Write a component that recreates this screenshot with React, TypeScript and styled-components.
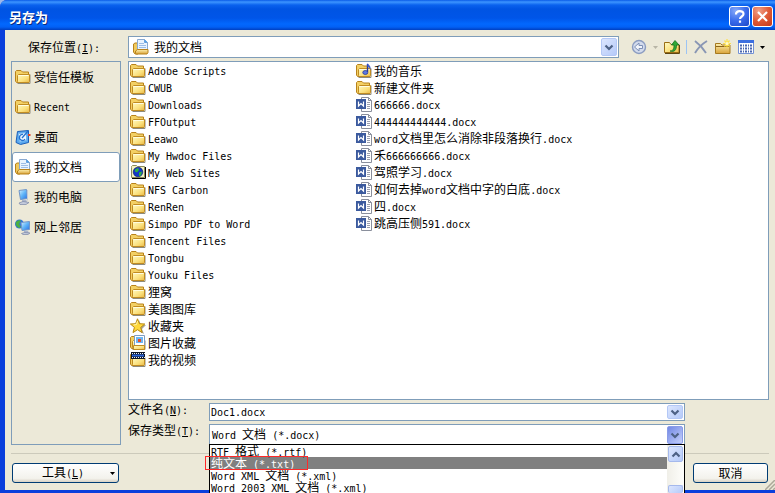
import React, { useState } from "react";
import styled, { createGlobalStyle, css } from "styled-components";

const GlobalStyle = createGlobalStyle`
  *, *::before, *::after { box-sizing: border-box; }
  html, body { margin: 0; padding: 0; overflow: hidden; }
  body, button, input, select {
    font-family: "Noto Sans CJK SC", sans-serif;
    font-size: 12px;
    color: #000;
  }
`;

const line = "#7f9db9";
const face = "#ece9d8";

/* ---------- text ---------- */

const Latin = styled.span`
  font-family: "DejaVu Sans Mono", monospace;
  font-size: 10px;
  white-space: pre;
`;

const Mixed = ({ children }: { children: string }) => (
  <>
    {(children.match(/[\u3000-\u9fff]+|[^\u3000-\u9fff]+/g) || []).map((run, i) =>
      /[\u3000-\u9fff]/.test(run) ? <span key={i}>{run}</span> : <Latin key={i}>{run}</Latin>
    )}
  </>
);

const Caption = ({ text, accel, colon }: { text: string; accel: string; colon?: boolean }) => (
  <>
    {text}
    <Latin>
      (<u>{accel}</u>){colon ? ":" : ""}
    </Latin>
  </>
);

/* ---------- icons ---------- */

const Svg = styled.svg`
  display: block;
  flex: none;
`;

const Icon = ({ children, w = 16, h = 16 }: { children: React.ReactNode; w?: number; h?: number }) => (
  <Svg width={w} height={h} viewBox={`0 0 ${w} ${h}`} aria-hidden="true">
    {children}
  </Svg>
);

const Gradients = () => (
  <Svg width="0" height="0" aria-hidden="true">
    <defs>
      <linearGradient id="gold" x1="0" y1="0" x2="1" y2="1">
        <stop offset="0" stopColor="#fffbc4" />
        <stop offset="0.6" stopColor="#fbe07c" />
        <stop offset="1" stopColor="#e9b845" />
      </linearGradient>
      <linearGradient id="screen" x1="0" y1="0" x2="1" y2="1">
        <stop offset="0" stopColor="#d8f3ff" />
        <stop offset="0.5" stopColor="#5fb4f8" />
        <stop offset="1" stopColor="#2a6fe0" />
      </linearGradient>
      <linearGradient id="tan" x1="0" y1="0" x2="0" y2="1">
        <stop offset="0" stopColor="#fdf0b0" />
        <stop offset="1" stopColor="#d9a33a" />
      </linearGradient>
    </defs>
  </Svg>
);

const FolderShape = () => (
  <>
    <path d="M2.5 14.5h12.500v-9" fill="none" stroke="#8d8a7c" strokeWidth="1" />
    <path d="M.5 12V2.500L1.500 1.500h4.500L7.500 3h6v10.500H1.500z" fill="#f3d064" stroke="#b8821b" />
    <path d="M3.500 5.500h11v7L14 13.500H3L2.500 12.500v-6z" fill="url(#gold)" stroke="#c18c22" />
    <path d="M3.500 6.500h10" stroke="#fffde0" />
  </>
);

const Folder = () => (
  <Icon>
    <FolderShape />
  </Icon>
);

const Documents = () => (
  <Icon>
    <path d="M.5 13V5L2 4h3v11H2z" fill="#f0c95c" stroke="#b8821b" />
    <path d="M4.500.5h7l3 3v8h-10z" fill="#e9f4ff" stroke="#8aa9d0" />
    <path d="M11.500.5v3h3" fill="#4fa6ee" stroke="#6aa0dc" />
    <path d="M6 4.500h5M6 6.500h7M6 8.500h7" stroke="#9dbde6" />
    <path d="M2.500 14.500V12l2-1.500h10.500v3l-1 1.500h-11z" fill="url(#tan)" stroke="#b8821b" />
  </Icon>
);

const Desktop = () => (
  <Icon>
    <path d="M2.500 2.500l11-1v12l-8 2-4.500-2z" fill="#5aa9f0" stroke="#1b5fb8" />
    <path d="M3.500 4.500l8-1v8l-7 1.500z" fill="#eef7ff" stroke="#6db4f2" />
    <path d="M8 5.500a3 3 0 1 0 2 4.500" fill="none" stroke="#2372cf" strokeWidth="1.300" />
    <path d="M7 9l6-7" stroke="#2372cf" strokeWidth="1.300" />
    <path d="M13 5h2.500v2H13z" fill="#e0442a" />
  </Icon>
);

const Computer = () => (
  <Icon>
    <path d="M4 1.500L11.500.5l1 9-7 1z" fill="url(#screen)" stroke="#7196c8" />
    <path d="M12.500 1v10l-1 1" fill="none" stroke="#c3cad8" />
    <path d="M7 11h4l1 2H7z" fill="#aab4ca" />
    <path d="M4 14l4-1.500 6 1-3 2H5z" fill="#c4cbdc" stroke="#7b86a6" strokeWidth=".7" />
  </Icon>
);

const Network = () => (
  <Icon>
    <circle cx="4.500" cy="5" r="4.500" fill="#2f72d8" />
    <path d="M1 3c2-2 4-2 5-1L4 5l2 3-2 1C2 8 0 6 1 3z" fill="#4cb043" />
    <path d="M6 3.500l8.500-1v8l-7.500 1z" fill="url(#screen)" stroke="#7196c8" />
    <path d="M9 12h4l1 2H9z" fill="#aab4ca" />
    <path d="M6.500 14.500l3-1 5.500.500-2 1.500H8z" fill="#c4cbdc" stroke="#7b86a6" strokeWidth=".7" />
  </Icon>
);

const WebFolder = () => (
  <Icon>
    <path d="M1.500 2.500v-1l1-1h4l1 1h7v11h-13z" fill="#f4f1c0" stroke="#8b8a5c" />
    <path d="M15.500 2v11.500H2" fill="none" stroke="#000" />
    <circle cx="8" cy="7" r="4.800" fill="#1238c8" stroke="#001060" strokeWidth=".6" />
    <path d="M5 4.500l3-1.500 1 2L7 7.500 5 6.500zM9 7.500l3-1-1 4-2 .500z" fill="#2fb43c" />
  </Icon>
);

const Star = () => (
  <Icon>
    <path d="M9 2l2 5h5l-4 4 2 5-5-3" fill="#a9a494" />
    <path d="M7.500.8l2 4.900 5.300.3-4.100 3.400 1.400 5.200-4.600-2.900L3 14.600l1.400-5.200L.4 6l5.200-.3z" fill="#ffd83a" stroke="#b98a12" />
    <path d="M7.500 3L6.500 6.500 3.500 7" fill="none" stroke="#fff6b0" />
  </Icon>
);

const Pictures = () => (
  <Icon>
    <FolderShape />
    <path d="M4.500.5h10v10h-10z" fill="#fff" stroke="#7f9dc0" />
    <path d="M6 2h7v6H6z" fill="#6db6f5" />
    <path d="M8 4h3v3H8z" fill="#e2502c" />
    <path d="M3.500 10.500h11v4h-11z" fill="url(#gold)" stroke="#c18c22" />
  </Icon>
);

const Video = () => (
  <Icon>
    <FolderShape />
    <path d="M1 0h14v7H1z" fill="#101828" />
    <path d="M2 1.500h13M2 5.500h13" stroke="#e8f0ff" strokeDasharray="1 1" />
    <path d="M2 2.500h12v2H2z" fill="#2b64d8" />
  </Icon>
);

const Music = () => (
  <Icon>
    <FolderShape />
    <path d="M11.500 1v8" stroke="#26379c" strokeWidth="1.400" />
    <path d="M11.500 0l3 4v3L13 4.500l-1.500-1z" fill="#4060d0" />
    <ellipse cx="9.300" cy="9.500" rx="2.500" ry="2" fill="#5b78e0" stroke="#26379c" strokeWidth=".8" />
  </Icon>
);

const WordDoc = () => (
  <Icon>
    <path d="M5.500.5h7l3 3v11h-10z" fill="#fff" stroke="#8a8f9c" />
    <path d="M12.500.5v3h3" fill="none" stroke="#8a8f9c" />
    <path d="M11 5.500h3M11 7.500h3M11 9.500h3M11 11.500h3" stroke="#9a9fae" />
    <path d="M0 2h10v10H0z" fill="#3b5a9e" />
    <path d="M2.500 4.500v4.500L5 6.500l2.500 2.500V4.500" fill="none" stroke="#fff" strokeWidth="1.200" />
  </Icon>
);

const Chevron = ({ up }: { up?: boolean }) => (
  <Icon w={10} h={7}>
    <path d={up ? "M1.500 5.500L5 2l3.500 3.500" : "M1.500 1.500L5 5l3.500-3.500"} fill="none" stroke="#4d6185" strokeWidth="2.200" />
  </Icon>
);

const Caret = ({ color = "#000" }: { color?: string }) => (
  <Icon w={5} h={3}>
    <path d="M0 0h5L2.500 3z" fill={color} />
  </Icon>
);

const Back = () => (
  <Icon>
    <circle cx="8" cy="8" r="6.500" fill="#d3dbec" stroke="#8b9cc0" strokeWidth="1.400" />
    <path d="M3.500 8L8 4v2.500h3.500v3H8V12z" fill="#f2f5fb" stroke="#7c8fb6" />
  </Icon>
);

const UpFolder = () => (
  <Icon>
    <path d="M.5 13.500v-10h5l1.500 2h8v8z" fill="url(#gold)" stroke="#9a6d14" />
    <path d="M1 14.500h14.500V6" fill="none" stroke="#5c4512" />
    <path d="M6 12c3 0 4-2 4-6H7.500L11 1.500 15 6h-2.500c0 5-2 7.500-6.500 6z" fill="#2fa836" stroke="#14701e" strokeWidth=".8" />
  </Icon>
);

const Delete = () => (
  <Icon>
    <path d="M2 2c4 3 8 7 11 12M14 2C9 5 5 9 2 14" fill="none" stroke="#8996b4" strokeWidth="1.900" />
  </Icon>
);

const NewFolder = () => (
  <Icon>
    <path d="M.5 14.500v-10h5l1.500 1.500h8v8.500z" fill="url(#tan)" stroke="#a67a20" />
    <path d="M1 7.500h13.500" stroke="#8a6318" />
    <path d="M12 0v9M8 4.500h8M9.500 1.500l5 6M14.500 1.500l-5 6" stroke="#ffe14a" strokeWidth="1.200" />
    <circle cx="12" cy="4.500" r="1.500" fill="#fffbd0" />
  </Icon>
);

const Views = () => (
  <Icon>
    <path d="M.5 1.500h15v13H.5z" fill="#fff" stroke="#7391d4" />
    <path d="M0 1h16v3H0z" fill="#3d6fe0" />
    <path d="M2 6.500h12M2 9.500h12M2 12.500h12" stroke="#4a66b0" strokeWidth="2" strokeDasharray="2 1 1 1" />
  </Icon>
);

/* ---------- window ---------- */

const Window = styled.main`
  position: relative;
  display: flex;
  flex-direction: column;
  height: 100vh;
  overflow: hidden;
  background: #0a3fdc;
`;

const TitleBar = styled.header`
  display: flex;
  flex: none;
  align-items: center;
  gap: 2px;
  height: 30px;
  padding: 3px 2px 0 9px;
  border-top-left-radius: 7px;
  box-shadow: 0 -8px 0 8px #9db8ea;
  clip-path: inset(0);
  background: linear-gradient(#0a5be8 0, #3d95ff 2px, #0a62ee 5px, #0054e3 9px, #0055e8 18px, #0268fe 24px, #0260f5 27px, #003fc0 30px);
`;

const Title = styled.h1`
  flex: 1;
  margin: 0;
  color: #fff;
  font-size: 13px;
  line-height: 20px;
  font-weight: 700;
  text-shadow: 1px 1px #0a2a80;
`;

const CaptionButton = styled.button<{ $close?: boolean }>`
  display: grid;
  place-items: center;
  width: 21px;
  height: 21px;
  padding: 0;
  border: 1px solid #fff;
  border-radius: 3px;
  background: ${(p) =>
    p.$close
      ? "radial-gradient(circle at 30% 20%, #f0a088, #e05a36 50%, #c4381a)"
      : "radial-gradient(circle at 30% 20%, #86a8f8, #3a6cec 50%, #1c48c8)"};
`;

const Body = styled.div`
  display: flex;
  flex: 1;
  flex-direction: column;
  min-height: 0;
  margin: 0 0 3px 5px;
  padding: 6px 6px 7px;
  background: ${face};
`;

const LookRow = styled.div`
  display: grid;
  grid-template-columns: 117px 1fr 150px;
  grid-template-rows: 22px;
  flex: none;
  margin-bottom: 3px;
`;

const LookLabel = styled.label`
  padding-left: 17px;
  line-height: 22px;
`;

const Combo = styled.div`
  position: relative;
  display: grid;
  grid-template-columns: 1fr 18px;
  align-items: center;
  border: 1px solid ${line};
  background: #fff;
`;

const LookSelect = styled.select`
  grid-area: 1 / 1 / 2 / 3;
  width: 100%;
  height: 20px;
  padding: 0 20px 0 25px;
  border: 0;
  appearance: none;
  background: transparent;
  line-height: 20px;
  outline: none;
`;

const LookIcon = styled.span`
  grid-area: 1 / 1;
  padding-left: 4px;
  pointer-events: none;
`;

const Drop = styled.span<{ $pressed?: boolean }>`
  grid-area: 1 / 2;
  display: grid;
  place-items: center;
  align-self: stretch;
  margin: 1px;
  border: 1px solid ${(p) => (p.$pressed ? "#8a9ce8" : "#b4c8f6")};
  border-radius: 2px;
  background: ${(p) =>
    p.$pressed ? "linear-gradient(135deg, #7288e4, #c4d0fc)" : "linear-gradient(135deg, #dce6fe, #b5caf9)"};
  pointer-events: none;
`;

const ToolBar = styled.div`
  display: flex;
  align-items: center;
  padding-left: 12px;
`;

const ToolButton = styled.button<{ $gap?: number }>`
  padding: 0;
  border: 0;
  background: none;
  margin-right: ${(p) => p.$gap ?? 8}px;
`;

const ToolDivider = styled.span`
  width: 1px;
  height: 14px;
  margin-right: 6px;
  background: #9cc4f4;
`;

const Content = styled.div`
  display: grid;
  grid-template-columns: 110px 1fr;
  gap: 7px;
  flex: 1;
  min-height: 0;
`;

const Places = styled.nav`
  display: flex;
  flex-direction: column;
  border: 1px solid ${line};
`;

const Place = styled.button<{ $active?: boolean }>`
  display: flex;
  align-items: center;
  gap: 3px;
  height: 30px;
  padding: 0 0 0 2px;
  border: 1px solid transparent;
  border-radius: 3px;
  background: none;
  text-align: left;
  line-height: 18px;
  ${(p) =>
    p.$active &&
    css`
      border-color: ${line};
      background: #fff;
    `}
`;

const MainColumn = styled.div`
  display: flex;
  flex-direction: column;
  gap: 3px;
  min-width: 0;
`;

const Files = styled.div`
  display: flex;
  flex: 1;
  min-height: 0;
  padding: 0 1px;
  border: 1px solid ${line};
  background: #fff;
`;

const FileColumn = styled.ul`
  flex: none;
  width: 226px;
  margin: 0;
  padding: 0;
  list-style: none;
`;

const File = styled.li`
  display: flex;
  align-items: center;
  gap: 2px;
  height: 17px;
  line-height: 17px;
  white-space: nowrap;
`;

const Field = styled.div<{ $tall?: boolean }>`
  display: grid;
  grid-template-columns: 81px 1fr;
  flex: none;
  height: ${(p) => (p.$tall ? 21 : 18)}px;
  padding-right: 84px;
`;

const FieldLabel = styled.label`
  line-height: 12px;
`;

const NameInput = styled.input`
  grid-area: 1 / 1 / 2 / 3;
  width: 100%;
  height: 16px;
  padding: 0 20px 0 1px;
  border: 0;
  outline: none;
  background: transparent;
  font-family: "DejaVu Sans Mono", monospace;
  font-size: 10px;
`;

const TypeValue = styled.span`
  grid-area: 1 / 1;
  padding-left: 2px;
  line-height: 18px;
  white-space: nowrap;
`;

const TypeSelect = styled.select`
  grid-area: 1 / 1 / 2 / 3;
  width: 100%;
  height: 19px;
  opacity: 0;
`;

const Popup = styled.div`
  position: absolute;
  z-index: 2;
  top: 19px;
  left: -1px;
  right: -1px;
  display: grid;
  grid-template-columns: 1fr 17px;
  border: 1px solid #000;
  background: #fff;
`;

const Options = styled.ul`
  margin: 0;
  padding: 0;
  list-style: none;
`;

const Option = styled.li<{ $active?: boolean }>`
  height: 12px;
  padding-left: 1px;
  line-height: 12px;
  white-space: nowrap;
  color: ${(p) => (p.$active ? "#fff" : "#000")};
  background: ${(p) => (p.$active ? "#808080" : "transparent")};
`;

const Scroll = styled.div`
  display: flex;
  flex-direction: column;
  justify-content: space-between;
  padding: 1px 1px 0;
  background: linear-gradient(90deg, #f0efe8, #fefefb);
`;

const ScrollPart = styled.span`
  display: grid;
  place-items: center;
  height: 16px;
  border: 1px solid #a5b9ec;
  border-radius: 2px;
  background: linear-gradient(135deg, #dce6fe, #b5caf9);
`;

const ScrollThumb = styled(ScrollPart)`
  height: 8px;
  border-bottom: 0;
`;

const Mark = styled.span`
  position: absolute;
  z-index: 3;
  top: 31px;
  left: -5px;
  width: 103px;
  height: 14px;
  border: 1px solid #ff2a2a;
  pointer-events: none;
`;

const Footer = styled.footer`
  display: flex;
  flex: none;
  justify-content: space-between;
  margin-top: 8px;
  padding: 9px 1px 0;
  border-top: 1px solid #cccabb;
`;

const PushButton = styled.button<{ $wide?: boolean }>`
  display: flex;
  align-items: center;
  justify-content: center;
  width: ${(p) => (p.$wide ? 107 : 75)}px;
  height: 20px;
  padding: 0 3px;
  border: 1px solid #003c74;
  border-radius: 3px;
  background: linear-gradient(#fff, #f3f2ec 80%, #d8d2c4);
  line-height: 18px;
`;

const PushText = styled.span`
  flex: 1;
`;

const Grip = styled.span`
  position: absolute;
  right: 0;
  bottom: 3px;
`;

const places = [
  { name: "受信任模板", icon: Folder },
  { name: "Recent", icon: Folder },
  { name: "桌面", icon: Desktop },
  { name: "我的文档", icon: Documents },
  { name: "我的电脑", icon: Computer },
  { name: "网上邻居", icon: Network },
];

const columns = [
  [
    { name: "Adobe Scripts", icon: Folder },
    { name: "CWUB", icon: Folder },
    { name: "Downloads", icon: Folder },
    { name: "FFOutput", icon: Folder },
    { name: "Leawo", icon: Folder },
    { name: "My Hwdoc Files", icon: Folder },
    { name: "My Web Sites", icon: WebFolder },
    { name: "NFS Carbon", icon: Folder },
    { name: "RenRen", icon: Folder },
    { name: "Simpo PDF to Word", icon: Folder },
    { name: "Tencent Files", icon: Folder },
    { name: "Tongbu", icon: Folder },
    { name: "Youku Files", icon: Folder },
    { name: "狸窝", icon: Folder },
    { name: "美图图库", icon: Folder },
    { name: "收藏夹", icon: Star },
    { name: "图片收藏", icon: Pictures },
    { name: "我的视频", icon: Video },
  ],
  [
    { name: "我的音乐", icon: Music },
    { name: "新建文件夹", icon: Folder },
    { name: "666666.docx", icon: WordDoc },
    { name: "444444444444.docx", icon: WordDoc },
    { name: "word文档里怎么消除非段落换行.docx", icon: WordDoc },
    { name: "禾666666666.docx", icon: WordDoc },
    { name: "驾照学习.docx", icon: WordDoc },
    { name: "如何去掉word文档中字的白底.docx", icon: WordDoc },
    { name: "四.docx", icon: WordDoc },
    { name: "跳高压侧591.docx", icon: WordDoc },
  ],
];

const listed = ["RTF 格式 (*.rtf)", "纯文本 (*.txt)", "Word XML 文档 (*.xml)", "Word 2003 XML 文档 (*.xml)"];
const types = ["Word 文档 (*.docx)", ...listed];

export default function App() {
  const [place, setPlace] = useState("我的文档");
  const [type, setType] = useState(types[0]);

  return (
    <Window>
      <GlobalStyle />
      <TitleBar>
        <Title>另存为</Title>
        <CaptionButton aria-label="帮助">
          <Icon w={15} h={15}>
            <path d="M4 5.500C4 1 11.500 1 11.500 5c0 2.500-3.500 2.500-3.500 5M8 11.500v2.200" fill="none" stroke="#fff" strokeWidth="2.200" />
          </Icon>
        </CaptionButton>
        <CaptionButton $close aria-label="关闭">
          <Icon w={15} h={15}>
            <path d="M3 3l9 9M12 3l-9 9" stroke="#fff" strokeWidth="2.200" />
          </Icon>
        </CaptionButton>
      </TitleBar>

      <Body>
        <LookRow>
          <LookLabel htmlFor="look">
            <Caption text="保存位置" accel="I" colon />
          </LookLabel>
          <Combo>
            <LookSelect id="look" value={place} onChange={(e) => setPlace(e.target.value)}>
              {places.map((p) => (
                <option key={p.name}>{p.name}</option>
              ))}
            </LookSelect>
            <LookIcon>
              <Documents />
            </LookIcon>
            <Drop>
              <Chevron />
            </Drop>
          </Combo>
          <ToolBar>
            <ToolButton $gap={6} aria-label="后退"><Back /></ToolButton>
            <ToolButton $gap={6} aria-label="历史"><Caret color="#b8b5a6" /></ToolButton>
            <ToolButton $gap={6} aria-label="向上一级"><UpFolder /></ToolButton>
            <ToolDivider />
            <ToolButton $gap={6} aria-label="删除"><Delete /></ToolButton>
            <ToolButton $gap={7} aria-label="新建文件夹"><NewFolder /></ToolButton>
            <ToolButton $gap={6} aria-label="视图"><Views /></ToolButton>
            <ToolButton $gap={0} aria-label="视图选项"><Caret /></ToolButton>
          </ToolBar>
        </LookRow>

        <Content>
          <Places>
            {places.map(({ name, icon: Glyph }) => (
              <Place key={name} $active={name === place} onClick={() => setPlace(name)}>
                <Glyph />
                <span><Mixed>{name}</Mixed></span>
              </Place>
            ))}
          </Places>
          <MainColumn>
            <Files>
              {columns.map((files, i) => (
                <FileColumn key={i}>
                  {files.map(({ name, icon: Glyph }) => (
                    <File key={name}>
                      <Glyph />
                      <span><Mixed>{name}</Mixed></span>
                    </File>
                  ))}
                </FileColumn>
              ))}
            </Files>
            <Field>
              <FieldLabel htmlFor="name">
                <Caption text="文件名" accel="N" colon />
              </FieldLabel>
              <Combo>
                <NameInput id="name" defaultValue="Doc1.docx" />
                <Drop><Chevron /></Drop>
              </Combo>
            </Field>
            <Field $tall>
              <FieldLabel htmlFor="type">
                <Caption text="保存类型" accel="T" colon />
              </FieldLabel>
              <Combo>
                <TypeValue aria-hidden="true"><Mixed>{type}</Mixed></TypeValue>
                <TypeSelect id="type" value={type} onChange={(e) => setType(e.target.value)}>
                  {types.map((t) => (
                    <option key={t}>{t}</option>
                  ))}
                </TypeSelect>
                <Drop $pressed><Chevron /></Drop>
                <Popup>
                  <Options role="listbox" aria-label="保存类型">
                    {listed.map((t, i) => (
                      <Option key={t} role="option" aria-selected={i === 1} $active={i === 1} onClick={() => setType(t)}>
                        <Mixed>{t}</Mixed>
                      </Option>
                    ))}
                  </Options>
                  <Scroll>
                    <ScrollPart><Chevron up /></ScrollPart>
                    <ScrollThumb />
                  </Scroll>
                </Popup>
                <Mark />
              </Combo>
            </Field>
          </MainColumn>
        </Content>

        <Footer>
          <PushButton $wide>
            <PushText><Caption text="工具" accel="L" /></PushText>
            <Caret />
          </PushButton>
          <PushButton>取消</PushButton>
        </Footer>
      </Body>
      <Grip>
        <Icon w={10} h={10}>
          <path d="M0 10L10 0M4 10l6-6M8 10l2-2" stroke="#aca899" strokeWidth="1.500" />
        </Icon>
      </Grip>
      <Gradients />
    </Window>
  );
}
